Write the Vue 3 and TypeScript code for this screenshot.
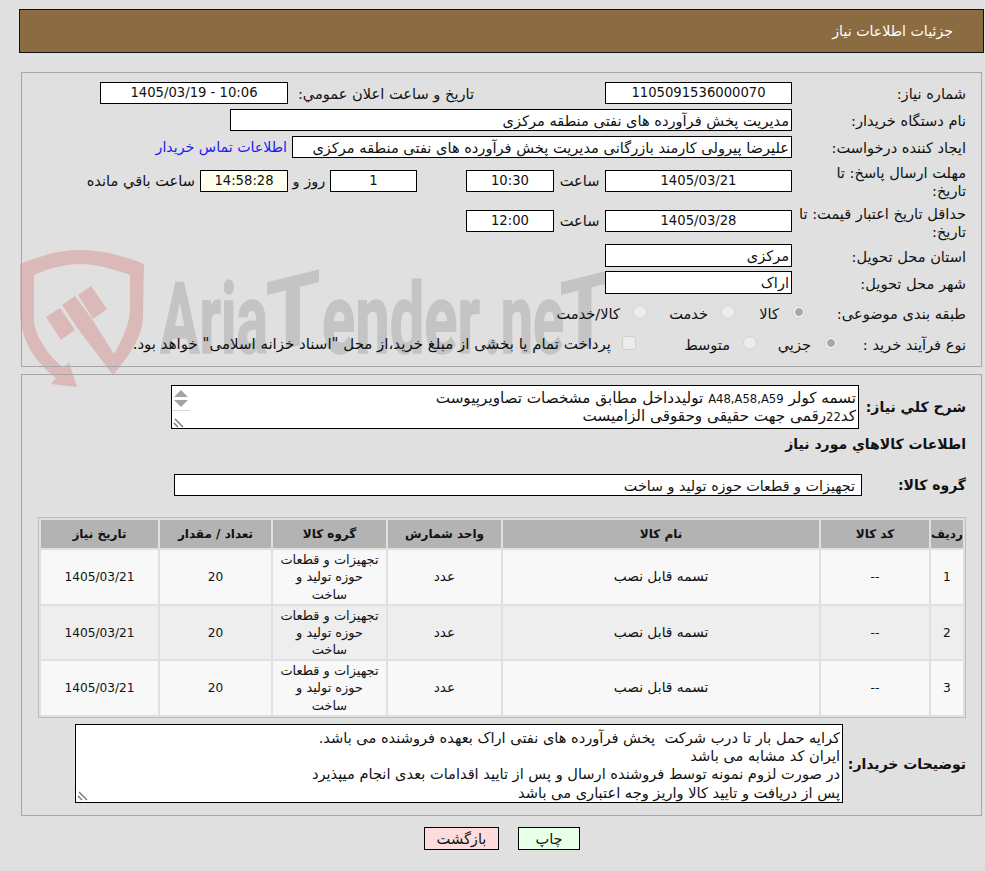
<script setup lang="ts">
const rows = [1, 2, 3].map((n) => ({
  n,
  code: '--',
  name: 'تسمه قابل نصب',
  unit: 'عدد',
  group: 'تجهیزات و قطعات حوزه تولید و ساخت',
  qty: '20',
  date: '1405/03/21',
}))
const notes = [
  'کرایه حمل بار تا درب شرکت  پخش فرآورده های نفتی اراک بعهده فروشنده می باشد.',
  'ایران کد مشابه می باشد',
  'در صورت لزوم نمونه توسط فروشنده ارسال و پس از تایید اقدامات بعدی انجام میپذیرد',
  'پس از دریافت و تایید کالا واریز وجه اعتباری می باشد',
]
</script>

<template>
  <div class="page" dir="rtl">
    <svg class="watermark" width="985" height="871" viewBox="0 0 985 871" aria-hidden="true">
      <g fill="#dcb9b9">
        <path d="M20 264C45 254 62 250 80 250C98 250 120 254 144 264L143 315C143 340 125 360 113 375L114 354C125 335 130 320 130 310L130 275C110 268 95 264 80 264C65 264 50 268 34 275L34 320C34 335 50 358 64 368L69 362L77 387L51 384L56 378C35 362 20 340 20 310Z" />
        <path d="M46 317L60 308L75 330L61 340Z" />
        <path d="M62 305L75 296L92 319L114 354L113 375L78 329Z" />
        <path d="M78 295L91 286L107 309L93 319Z" />
      </g>
      <g class="wm-text" fill="#c4c4c4" stroke="#c4c4c4" stroke-width="1.5">
        <text x="160" y="353" textLength="108" lengthAdjust="spacingAndGlyphs">Aria</text>
        <text transform="translate(266 353) skewY(-14)" textLength="54" lengthAdjust="spacingAndGlyphs">T</text>
        <text x="322" y="353" textLength="158" lengthAdjust="spacingAndGlyphs">ender</text>
        <text x="484" y="353" textLength="80" lengthAdjust="spacingAndGlyphs">.ne</text>
        <text transform="translate(560 353) skewY(-14)" textLength="50" lengthAdjust="spacingAndGlyphs">T</text>
      </g>
    </svg>

    <header class="title-bar">جزئیات اطلاعات نیاز</header>

    <section class="panel panel-form">
      <div class="row r1">
        <label class="lbl">شماره نیاز:</label>
        <div class="field w187 num">1105091536000070</div>
        <label class="lbl-public">تاریخ و ساعت اعلان عمومي:</label>
        <div class="field w188 num ltr">1405/03/19 - 10:06</div>
      </div>
      <div class="row r2">
        <label class="lbl">نام دستگاه خریدار:</label>
        <div class="field start w562">مدیریت پخش فرآورده های نفتی منطقه مرکزی</div>
      </div>
      <div class="row r2">
        <label class="lbl">ایجاد کننده درخواست:</label>
        <div class="field start w500">علیرضا پیرولی کارمند بازرگانی مدیریت پخش فرآورده های نفتی منطقه مرکزی</div>
        <a class="contact">اطلاعات تماس خریدار</a>
      </div>
      <div class="row r4">
        <label class="lbl two">مهلت ارسال پاسخ: تا<br />تاریخ:</label>
        <div class="field w187 num">1405/03/21</div>
        <span class="hour">ساعت</span>
        <div class="field w88 num">10:30</div>
        <div class="field w87 gap-day num">1</div>
        <span class="day">روز و</span>
        <div class="field w88 timer num">14:58:28</div>
        <span class="remain">ساعت باقي مانده</span>
      </div>
      <div class="row r5">
        <label class="lbl two">حداقل تاریخ اعتبار قیمت: تا<br />تاریخ:</label>
        <div class="field w187 num">1405/03/28</div>
        <span class="hour">ساعت</span>
        <div class="field w88 num">12:00</div>
      </div>
      <div class="row r6">
        <label class="lbl">استان محل تحویل:</label>
        <div class="field start w187">مرکزی</div>
      </div>
      <div class="row r7">
        <label class="lbl">شهر محل تحویل:</label>
        <div class="field start w187">اراک</div>
      </div>
      <div class="row r8">
        <label class="lbl l8">طبقه بندی موضوعی:</label>
        <div class="opt o71"><i class="radio on"></i><span>کالا</span></div>
        <div class="opt o88"><i class="radio"></i><span>خدمت</span></div>
        <div class="opt"><i class="radio"></i><span>کالا/خدمت</span></div>
      </div>
      <div class="row r9">
        <label class="lbl l9">نوع فرآیند خرید :</label>
        <div class="opt o81"><i class="radio on"></i><span>جزیي</span></div>
        <div class="opt o121"><i class="radio"></i><span>متوسط</span></div>
        <div class="opt"><i class="check"></i><span class="pay">پرداخت تمام یا بخشی از مبلغ خرید،از محل "اسناد خزانه اسلامی" خواهد بود.</span></div>
      </div>
    </section>

    <section class="panel panel-goods">
      <div class="desc-row">
        <label class="blbl">شرح کلي نیاز:</label>
        <div class="desc">
          <div>تسمه کولر <span class="latin">A48,A58,A59</span> تولیدداخل مطابق مشخصات تصاویرپیوست</div>
          <div>کد<span class="latin">22</span>رقمی جهت حقیقی وحقوقی الزامیست</div>
          <div class="scroller">
            <i class="up"></i>
            <i class="down"></i>
            <svg class="grip" width="12" height="12" viewBox="0 0 12 12"><path d="M2 3L10 11M1 7L5 11" stroke="#777" stroke-width="1.4" fill="none" /></svg>
          </div>
        </div>
      </div>
      <h3 class="goods-title">اطلاعات کالاهاي مورد نیاز</h3>
      <div class="group-row">
        <label class="blbl">گروه کالا:</label>
        <div class="field start group-field">تجهیزات و قطعات حوزه تولید و ساخت</div>
      </div>

      <table class="items">
        <colgroup>
          <col class="c-n" /><col class="c-code" /><col class="c-name" /><col class="c-unit" /><col class="c-group" /><col class="c-qty" /><col class="c-date" />
        </colgroup>
        <thead>
          <tr>
            <th>ردیف</th><th>کد کالا</th><th>نام کالا</th><th>واحد شمارش</th><th>گروه کالا</th><th>تعداد / مقدار</th><th>تاریخ نیاز</th>
          </tr>
        </thead>
        <tbody>
          <tr v-for="r in rows" :key="r.n">
            <td class="tnum">{{ r.n }}</td><td class="tnum">{{ r.code }}</td><td>{{ r.name }}</td><td>{{ r.unit }}</td><td class="tgroup">{{ r.group }}</td><td class="tnum">{{ r.qty }}</td><td class="tnum">{{ r.date }}</td>
          </tr>
        </tbody>
      </table>

      <div class="notes-row">
        <label class="blbl">توضیحات خریدار:</label>
        <div class="notes">
          <div v-for="line in notes" :key="line" class="note-line">{{ line }}</div>
          <svg class="grip-notes" width="12" height="12" viewBox="0 0 12 12"><path d="M2 3L10 11M1 7L5 11" stroke="#777" stroke-width="1.4" fill="none" /></svg>
        </div>
      </div>
    </section>

    <div class="actions">
      <button class="btn print" type="button">چاپ</button>
      <button class="btn back" type="button">بازگشت</button>
    </div>
  </div>
</template>

<style>
html, body { margin: 0; background: #e0e0e0; }
</style>

<style scoped>
.page {
  position: relative;
  width: 985px;
  height: 871px;
  overflow: hidden;
  padding-top: 9px;
  box-sizing: border-box;
  background: #e0e0e0;
  color: #111;
  font: 14.6px/18px "DejaVu Sans", sans-serif;
}
.watermark { position: absolute; left: 0; top: 0; direction: ltr; }
.wm-text text { font: 700 98px Roboto, sans-serif; direction: ltr; }
.title-bar, .panel, .actions { position: relative; }
.title-bar {
  height: 44px;
  margin: 0 1px 0 19px;
  padding-right: 30px;
  box-sizing: border-box;
  border: 1px solid #111;
  background: #8b6c42;
  color: #fff;
  font-size: 14.2px;
  line-height: 42px;
}
.panel {
  margin: 0 3px 0 21px;
  border: 1px solid #a6a6a6;
  box-sizing: border-box;
}
.panel-form { height: 295px; margin-top: 19px; padding-top: 9px; }
.panel-goods { height: 442px; margin-top: 7px; padding-top: 10px; }
.row { display: flex; align-items: center; height: 22px; }
.r2 { margin-top: 5px; }
.r4 { margin-top: 12px; }
.r5 { margin-top: 18px; }
.r6 { margin-top: 12px; height: 23px; }
.r7 { margin-top: 4px; height: 23px; }
.r8 { margin-top: 9px; height: 20px; }
.r9 { margin-top: 11px; height: 20px; }
.lbl { width: 174px; padding: 2px 15px 0 0; flex: none; white-space: nowrap; }
.r5 .two { padding-top: 0; margin-top: 4px; }
.l8 { width: 160px; }
.l9 { width: 128px; }
.field {
  flex: none;
  height: 100%;
  box-sizing: border-box;
  border: 1px solid #000;
  background: #fff;
  text-align: center;
  line-height: 20px;
  white-space: nowrap;
  overflow: hidden;
}
.num { font-size: 13.2px; }
.ltr { direction: ltr; margin-right: 5px; }
.start { text-align: right; padding: 0 2px; line-height: 22px; }
.w187 { width: 187px; }
.w188 { width: 188px; }
.w562 { width: 562px; }
.w500 { width: 500px; }
.w88 { width: 88px; }
.w87 { width: 87px; }
.lbl-public { width: 181px; margin-right: 131px; padding-top: 2px; flex: none; white-space: nowrap; }
.contact { margin-right: 5px; color: #1a1aee; font-size: 14.2px; white-space: nowrap; }
.hour { width: 51px; text-align: center; flex: none; }
.gap-day { margin-right: 49px; }
.day { width: 42px; text-align: center; flex: none; }
.timer { background: #ffffee; }
.remain { margin-right: 5px; white-space: nowrap; }
.opt { display: flex; align-items: center; flex: none; }
.o71 { width: 71px; }
.o81 { width: 81px; }
.o88 { width: 88px; }
.o121 { width: 121px; }
.opt span { margin-right: 13px; padding-top: 2px; white-space: nowrap; }
.opt .pay { margin-right: 11px; padding-top: 0; font-size: 15px; }
.radio {
  flex: none;
  width: 14px;
  height: 14px;
  box-sizing: border-box;
  border-radius: 50%;
  border: 1px solid #d2d2d2;
  background: #ececec;
  margin-top: -3px;
}
.radio.on { background: radial-gradient(circle, #a9a9a9 0 3.5px, #ececec 4.2px); }
.check {
  flex: none;
  width: 14px;
  height: 14px;
  box-sizing: border-box;
  border: 1px solid #d0d0d0;
  border-radius: 3px;
  background: #ececec;
  margin-top: -3px;
}
.blbl { font-weight: 700; font-size: 14px; white-space: nowrap; }
.desc-row { display: flex; align-items: center; padding-right: 15px; }
.desc-row .blbl { width: 107px; flex: none; }
.desc {
  position: relative;
  width: 688px;
  height: 44px;
  box-sizing: border-box;
  border: 1px solid #000;
  background: #fff;
  padding: 4px 2px 0 0;
  font-size: 15.2px;
  line-height: 17px;
  white-space: nowrap;
}
.latin { font-size: 11.6px; }
.scroller { position: absolute; left: 0; top: 0; bottom: 0; width: 18px; }
.up, .down { position: absolute; left: 2px; width: 0; height: 0; border: 7px solid transparent; }
.up { top: 4px; border-bottom-color: #a3a3a3; border-top-width: 0; }
.down { top: 14px; border-top-color: #a3a3a3; border-bottom-width: 0; }
.scroller::before { content: ""; position: absolute; left: 0; right: 0; top: 24px; border-top: 1px solid #d8d8d8; }
.grip { position: absolute; left: 1px; bottom: 0; }
.goods-title { margin: 7px 15px 0 0; font-size: 14px; line-height: 17px; font-weight: 700; }
.group-row { display: flex; align-items: center; height: 22px; margin-top: 21px; padding-right: 15px; }
.group-row .blbl { width: 104px; flex: none; }
.group-field { width: 688px; padding-right: 6px; font-size: 14.3px; }
.items {
  margin: 21px 15px 0 0;
  width: 928px;
  table-layout: fixed;
  border-collapse: separate;
  border-spacing: 2px;
  border: 1px solid #bdbdbd;
}
.c-n { width: 32px; }
.c-code { width: 108px; }
.c-name { width: 316px; }
.c-unit { width: 113px; }
.c-group { width: 113px; }
.c-qty { width: 111px; }
.c-date { width: 117px; }
.items th {
  height: 28px;
  padding: 0;
  background: #b3b3b3;
  font-size: 12px;
  font-weight: 700;
  white-space: nowrap;
  text-align: center;
}
.items td {
  box-sizing: border-box;
  height: 54px;
  padding: 0 6px;
  background: #f8f8f8;
  text-align: center;
  font-size: 13.8px;
  line-height: 17.3px;
}
.items td.tnum { font-size: 12.2px; padding-top: 2px; }
.items td.tgroup { font-size: 12.9px; }
.items tr:nth-child(2) td { background: #eeeeee; height: 53px; }
.notes-row { display: flex; align-items: center; margin-top: 6px; padding-right: 15px; }
.notes-row .blbl { width: 123px; flex: none; }
.notes {
  position: relative;
  width: 768px;
  height: 79px;
  box-sizing: border-box;
  border: 1px solid #000;
  background: #fff;
  padding: 4px 2px 0 0;
  line-height: 18.2px;
}
.note-line { white-space: pre-wrap; }
.grip-notes { position: absolute; left: 1px; bottom: 1px; }
.actions { display: flex; justify-content: center; gap: 19px; margin-top: 11px; padding-left: 19px; }
.btn {
  height: 23px;
  padding: 0;
  border: 1px solid #000;
  font: 14.6px/20px "DejaVu Sans", sans-serif;
  color: #111;
}
.print { width: 62px; background: #e8ffe8; }
.back { width: 75px; background: #ffdcdc; }
</style>
